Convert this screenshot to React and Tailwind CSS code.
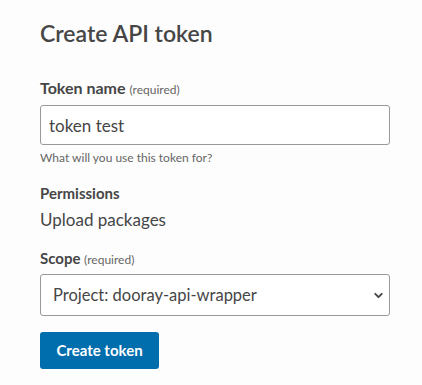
import { ChevronDown } from 'lucide-react'

export default function App() {
  return (
    <div className="min-h-screen bg-[#fdfdfd] px-10 pt-[18px] text-[#464646]" style={{ fontFamily: 'Lato, "Noto Sans", sans-serif' }}>
      <h1 className="text-[23px] font-semibold leading-[30px]">Create API token</h1>

      <form className="mt-[30px] w-[350px]">
        <label className="block text-[16px] font-bold leading-5">
          Token name <span className="text-[12px] font-normal text-[#666]">(required)</span>
        </label>
        <input
          defaultValue="token test"
          className="mt-[5px] block h-10 w-full rounded-[3px] border border-[#999] bg-white px-2 text-[17px] text-[#464646] outline-none"
        />
        <p className="mt-[5px] text-[12px] leading-4 text-[#666]">What will you use this token for?</p>

        <p className="mt-[17px] text-[15px] font-bold leading-5">Permissions</p>
        <p className="mt-[5px] text-[17px] leading-6">Upload packages</p>

        <label className="mt-[16px] block text-[15px] font-bold leading-5">
          Scope <span className="text-[12px] font-normal text-[#666]">(required)</span>
        </label>
        <div className="relative mt-[4px]">
          <select className="block h-[42px] w-full appearance-none rounded-[3px] border border-[#999] bg-white pl-3 text-[16.5px] text-[#464646] outline-none">
            <option>Project: dooray-api-wrapper</option>
          </select>
          <ChevronDown size={13} strokeWidth={3.5} className="pointer-events-none absolute right-[5px] top-[15px] text-[#464646]" />
        </div>

        <button
          type="button"
          className="mt-4 h-[37px] w-[119px] rounded-[3px] bg-[#006dad] text-[15px] font-bold text-white"
        >
          Create token
        </button>
      </form>
    </div>
  )
}
